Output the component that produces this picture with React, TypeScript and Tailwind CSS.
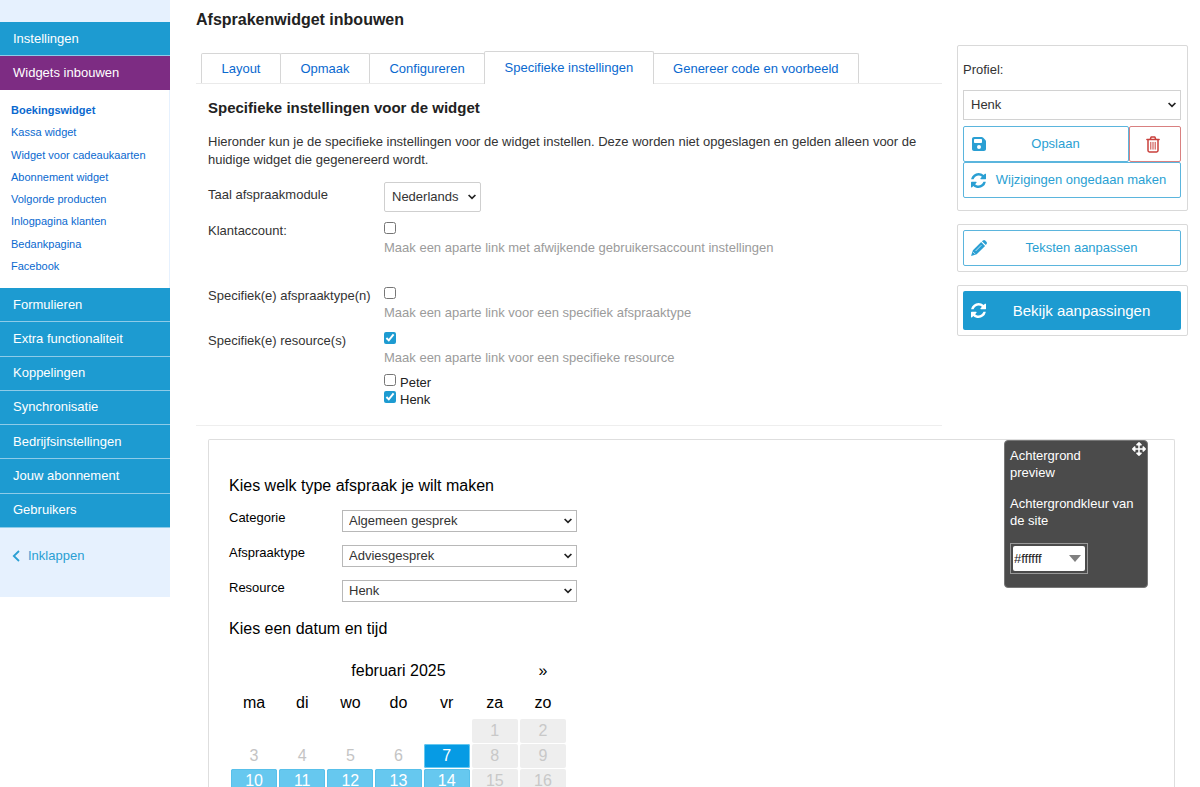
import React from "react";
import { FaArrowsAlt } from "react-icons/fa";
import { FaFloppyDisk } from "react-icons/fa6";

const subItems = [
  "Boekingswidget",
  "Kassa widget",
  "Widget voor cadeaukaarten",
  "Abonnement widget",
  "Volgorde producten",
  "Inlogpagina klanten",
  "Bedankpagina",
  "Facebook",
];

const menuItems = [
  "Formulieren",
  "Extra functionaliteit",
  "Koppelingen",
  "Synchronisatie",
  "Bedrijfsinstellingen",
  "Jouw abonnement",
  "Gebruikers",
];

const tabs = ["Layout", "Opmaak", "Configureren", "Specifieke instellingen", "Genereer code en voorbeeld"];
const activeTab = "Specifieke instellingen";

const weekdays = ["ma", "di", "wo", "do", "vr", "za", "zo"];
const weeks: (number | null)[][] = [
  [null, null, null, null, null, 1, 2],
  [3, 4, 5, 6, 7, 8, 9],
  [10, 11, 12, 13, 14, 15, 16],
];

function dayClass(day: number, column: number) {
  if (column > 4) return "bg-[#eeeeee] text-[#c8c8c8]";
  if (day < 7) return "text-[#c4c4c4]";
  if (day === 7) return "bg-[#069be4] text-white outline -outline-offset-1 outline-[#66c8ef]";
  return "bg-[#66c8ef] text-white outline -outline-offset-1 outline-[#58c0ea]";
}

function RefreshIcon() {
  return (
    <svg viewBox="0 0 1536 1536" className="size-[15px] shrink-0" fill="currentColor" aria-hidden="true">
      <path d="M1511 928q0 5-1 7-64 268-268 434.5T764 1536q-146 0-282.5-55T238 1324l-129 129q-19 19-45 19t-45-19-19-45V960q0-26 19-45t45-19h448q26 0 45 19t19 45-19 45l-137 137q71 66 161 102t187 36q134 0 250-65t186-179q11-17 53-117 8-23 30-23h192q13 0 22.5 9.5t9.5 22.5zm25-800v448q0 26-19 45t-45 19h-448q-26 0-45-19t-19-45 19-45l138-138Q969 256 768 256q-134 0-250 65T332 500q-11 17-53 117-8 23-30 23H50q-13 0-22.5-9.5T18 608v-7q65-268 270-434.5T768 0q146 0 284 55.5T1297 212l130-129q19-19 45-19t45 19 19 45z" />
    </svg>
  );
}

function PencilIcon() {
  return (
    <svg viewBox="0 0 16 16" className="size-4 shrink-0" aria-hidden="true">
      <path fill="currentColor" d="M10.9 1.3 12 .4q1.2-.8 2.2.2l1.2 1.2q1 1.1.2 2.2L14.8 5.1zM10.2 2l3.9 3.9-8.4 8.3L0 16l1.9-5.7z" />
      <path stroke="#ffffff" strokeWidth=".7" fill="none" d="M10.3 1.4l4.4 4.4M4.6 11l5.8-5.8M2 11.9l2 2" />
    </svg>
  );
}

function TrashIcon() {
  return (
    <svg viewBox="0 0 14 17" className="h-[17px] w-3.5" fill="none" stroke="currentColor" strokeLinecap="round" strokeLinejoin="round" aria-hidden="true">
      <path strokeWidth="1.5" d="M.9 3.5h12.2M4.3 3.3l.8-2.2h3.8l.8 2.2M2 3.7V14.5q0 1.4 1.4 1.4h7.2q1.4 0 1.4-1.4V3.7" />
      <path strokeWidth="1" d="M4.8 6.3v6.9M7 6.3v6.9M9.2 6.3v6.9" />
    </svg>
  );
}

function Select({ id, value, className }: { id: string; value: string; className: string }) {
  return (
    <div className="relative">
      <select id={id} className={"block appearance-none border bg-white text-[#333333] " + className}>
        <option>{value}</option>
      </select>
      <svg viewBox="0 0 8 6" className="pointer-events-none absolute inset-y-0 right-[5px] my-auto h-1.5 w-2" fill="none" stroke="#222222" strokeWidth="1.7">
        <path d="M.6 1 4 4.4 7.4 1" />
      </svg>
    </div>
  );
}

function Sidebar() {
  return (
    <nav className="w-[170px] shrink-0 self-start bg-[#e6f1fe] pt-[22px] pb-8">
      <a href="#instellingen" className="flex h-[34px] items-center border-b border-[#8ecbe8] bg-[#1d9bd1] px-[13px] text-white">
        Instellingen
      </a>
      <a href="#widgets" className="flex h-[34px] items-center bg-[#7d2c83] px-[13px] text-white">
        Widgets inbouwen
      </a>
      <ul className="grid min-h-[198px] auto-rows-fr border-r border-[#e6f1fe] bg-white pt-[9px] pb-[11px] pl-[11px] text-[11px]">
        {subItems.map((item, i) => (
          <li key={item} className="flex items-center">
            <a href="#widget" className={i === 0 ? "font-bold text-[#0a69cf]" : "text-[#0a69cf]"}>
              {item}
            </a>
          </li>
        ))}
      </ul>
      <ul className="grid min-h-60 auto-rows-fr">
        {menuItems.map((item) => (
          <li key={item} className="flex">
            <a href="#menu" className="flex grow items-center border-b border-[#8ecbe8] bg-[#1d9bd1] px-[13px] text-white">
              {item}
            </a>
          </li>
        ))}
      </ul>
      <button type="button" className="mt-[19px] flex items-center gap-2 px-3 text-[#2a9fd3]">
        <svg viewBox="0 0 8 12" className="h-3 w-2" fill="none" stroke="currentColor" strokeWidth="1.8">
          <path d="M7 1 1.8 6 7 11" />
        </svg>
        Inklappen
      </button>
    </nav>
  );
}

function CheckRow({ id, label, hint, checked, children }: { id: string; label: string; hint: string; checked?: boolean; children?: React.ReactNode }) {
  return (
    <div className="flex">
      <label htmlFor={id} className="w-44 shrink-0">
        {label}
      </label>
      <div>
        <input id={id} type="checkbox" defaultChecked={checked} className="block size-3 accent-[#1d9bd1]" />
        <p className="mt-[5px] text-[#9b9b9b]">{hint}</p>
        {children}
      </div>
    </div>
  );
}

function SettingsPanel() {
  return (
    <section className="w-[746px] border-b border-[#eeeeee] pl-3">
      <div className="-ml-3 border-b border-[#eaeaea] pl-[5px]">
        <div className="flex w-[658px] items-end" role="tablist">
          {tabs.map((tab) => (
            <button
              key={tab}
              type="button"
              role="tab"
              aria-selected={tab === activeTab}
              className={
                tab === activeTab
                  ? "-mb-px -ml-px h-[33px] grow rounded-t-xs border border-b-0 border-[#d6d6d6] bg-white px-[19px] text-[#0a69cf]"
                  : "-ml-px h-[30px] grow rounded-t-xs border border-b-0 border-[#d6d6d6] bg-white px-[19px] text-[#0a69cf] first:ml-0"
              }
            >
              {tab}
            </button>
          ))}
        </div>
      </div>
      <h2 className="mt-3.5 text-[15px] leading-5 font-bold text-[#222222]">Specifieke instellingen voor de widget</h2>
      <p className="mt-[15px] leading-[18px]">
        Hieronder kun je de specifieke instellingen voor de widget instellen. Deze worden niet opgeslagen en gelden alleen voor de
        huidige widget die gegenereerd wordt.
      </p>
      <div className="mt-[13px] flex">
        <label htmlFor="taal" className="w-44 pt-1">
          Taal afspraakmodule
        </label>
        <Select id="taal" value="Nederlands" className="h-[30px] w-[97px] rounded-xs border-[#cfcfcf] pl-[7px]" />
      </div>
      <div className="mt-2.5">
        <CheckRow id="klant" label="Klantaccount:" hint="Maak een aparte link met afwijkende gebruikersaccount instellingen" />
      </div>
      <div className="mt-[30px]">
        <CheckRow id="type" label="Specifiek(e) afspraaktype(n)" hint="Maak een aparte link voor een specifiek afspraaktype" />
      </div>
      <div className="mt-2.5 pb-[17px]">
        <CheckRow id="resource" label="Specifiek(e) resource(s)" hint="Maak een aparte link voor een specifieke resource" checked>
          <div className="mt-[7px] text-[#222222]">
            {["Peter", "Henk"].map((name) => (
              <label key={name} className="flex h-[17px] items-end gap-1 leading-4">
                <input type="checkbox" defaultChecked={name === "Henk"} className="size-3 self-start accent-[#1d9bd1]" />
                {name}
              </label>
            ))}
          </div>
        </CheckRow>
      </div>
    </section>
  );
}

function ProfilePanel() {
  const box = "rounded-xs border border-[#d9d9d9] pl-[5px] pr-1.5";
  const outline = "flex h-9 items-center rounded-xs border border-[#5bb5dd] bg-white pl-[7px] pr-1 text-[#2a9fd3]";
  return (
    <aside className="mr-3 flex w-[231px] shrink-0 flex-col gap-[13px] pt-[45px]">
      <div className={box + " pt-[15px] pb-3"}>
        <label htmlFor="profiel" className="block">
          Profiel:
        </label>
        <div className="mt-[11px]">
          <Select id="profiel" value="Henk" className="h-[30px] w-full border-[#d2d2d2] pl-[7px]" />
        </div>
        <div className="mt-[6px] flex">
          <button type="button" className={outline + " grow"}>
            <FaFloppyDisk className="size-4 shrink-0" />
            <span className="grow">Opslaan</span>
          </button>
          <button type="button" aria-label="Verwijderen" className="flex w-[52px] items-center justify-center rounded-xs border border-[#d98080] pr-1 text-[#c9403c]">
            <TrashIcon />
          </button>
        </div>
        <button type="button" className={outline + " w-full"}>
          <RefreshIcon />
          <span className="grow">Wijzigingen ongedaan maken</span>
        </button>
      </div>
      <div className={box + " py-[5px]"}>
        <button type="button" className={outline + " w-full"}>
          <PencilIcon />
          <span className="grow">Teksten aanpassen</span>
        </button>
      </div>
      <div className={box + " py-[5px]"}>
        <button type="button" className="flex h-[39px] w-full items-center rounded-xs bg-[#1d9bd1] pr-1 pl-2 text-[15px] text-white">
          <RefreshIcon />
          <span className="grow">Bekijk aanpassingen</span>
        </button>
      </div>
    </aside>
  );
}

function Field({ id, label, value }: { id: string; label: string; value: string }) {
  return (
    <div className="flex items-start">
      <label htmlFor={id} className="w-[113px]">
        {label}
      </label>
      <div className="pt-px">
        <Select id={id} value={value} className="h-[22px] w-[235px] border-[#b8b8b8] pl-[6px]" />
      </div>
    </div>
  );
}

function Preview() {
  return (
    <section className="relative mt-[13px] mr-[25px] ml-3 grow rounded-t-xs border border-b-0 border-[#dedede] px-5 pt-9 text-black">
      <h2 className="text-base leading-5">Kies welk type afspraak je wilt maken</h2>
      <div className="mt-[13px] flex flex-col gap-3">
        <Field id="categorie" label="Categorie" value="Algemeen gesprek" />
        <Field id="afspraaktype" label="Afspraaktype" value="Adviesgesprek" />
        <Field id="resource-keuze" label="Resource" value="Henk" />
      </div>
      <h2 className="mt-[17px] text-base leading-5">Kies een datum en tijd</h2>
      <table className="mt-[15px] w-[339px] table-fixed border-separate border-spacing-x-0.5 border-spacing-y-px text-center text-base">
        <thead>
          <tr className="h-8">
            <td />
            <th colSpan={5} className="font-normal">februari 2025</th>
            <td>
              <button type="button" aria-label="Volgende maand">»</button>
            </td>
          </tr>
          <tr className="h-[30px]">
            {weekdays.map((d) => (
              <th key={d} className="font-normal">{d}</th>
            ))}
          </tr>
        </thead>
        <tbody>
          {weeks.map((week, w) => (
            <tr key={w}>
              {week.map((day, c) => (
                <td key={c} className={day === null ? "" : "h-6 rounded-xs p-0 leading-5 " + dayClass(day, c)}>{day}</td>
              ))}
            </tr>
          ))}
        </tbody>
      </table>
      <div className="absolute top-0 right-[26px] w-36 rounded-sm border border-[#777777] bg-[#4b4b4b] px-[5px] pt-1.5 pb-[13px] leading-[17px] text-white">
        <FaArrowsAlt className="absolute top-[1px] right-[1px] size-3.5" />
        <p className="w-24">Achtergrond preview</p>
        <p className="mt-3.5">Achtergrondkleur van de site</p>
        <div className="mt-3.5 w-[78px] border border-[#999999] p-0.5">
          <div className="flex h-[25px] items-center rounded-xs bg-white pr-1 pl-px text-[#222222]">
            <input type="text" aria-label="Achtergrondkleur" defaultValue="#ffffff" className="w-0 min-w-0 grow text-[13px] outline-none" />
            <svg viewBox="0 0 12 7" className="h-[7px] w-3 fill-[#808080]">
              <path d="M0 0h12L6 7z" />
            </svg>
          </div>
        </div>
      </div>
    </section>
  );
}

export default function App() {
  return (
    <div className="flex min-h-screen bg-white font-['Liberation_Sans',Arial,sans-serif] text-[13px] leading-[18px] text-[#333333]">
      <Sidebar />
      <main className="flex grow flex-col pl-[26px]">
        <div className="flex justify-between">
          <div>
            <h1 className="pt-2.5 pb-[21px] text-base leading-5 font-bold text-[#222222]">Afsprakenwidget inbouwen</h1>
            <SettingsPanel />
          </div>
          <ProfilePanel />
        </div>
        <Preview />
      </main>
    </div>
  );
}
